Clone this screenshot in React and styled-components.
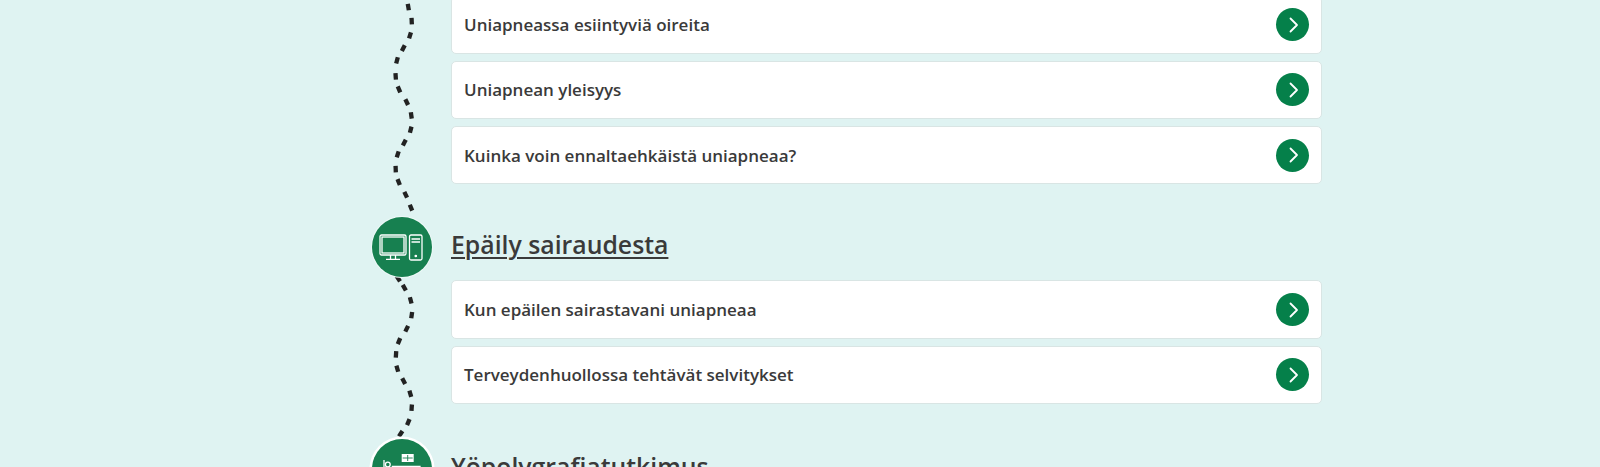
import React from 'react'
import styled, { createGlobalStyle } from 'styled-components'

const GlobalStyle = createGlobalStyle`
  html, body {
    margin: 0;
    padding: 0;
    background: #dff3f2;
    font-family: "Open Sans", "Liberation Sans", sans-serif;
    color: #3a3a3a;
  }
`

const steps = [
  {
    items: ['Uniapneassa esiintyviä oireita', 'Uniapnean yleisyys', 'Kuinka voin ennaltaehkäistä uniapneaa?'],
  },
  {
    title: 'Epäily sairaudesta',
    link: true,
    icon: 'computer',
    items: ['Kun epäilen sairastavani uniapneaa', 'Terveydenhuollossa tehtävät selvitykset'],
  },
  {
    title: 'Yöpolygrafiatutkimus',
    icon: 'bed',
    ring: true,
    items: [],
  },
]

// centre of each dash of the wavy line, in page pixels
const trailParts = [
  [[407, -7], [408.3, 6.7], [411.7, 20.7], [410, 35], [403.3, 47.7], [397, 60], [395.7, 76], [399, 89], [406.7, 101.7], [411.3, 115],
    [410.7, 129.3], [404.3, 142.3], [397.7, 154], [395.7, 168.7], [398.7, 181.7], [405.7, 194.3], [411, 207.3]],
  [[392, 268], [398.3, 278.3], [404.3, 287.3], [410.7, 300], [411.7, 314.7], [406.7, 328.3], [399, 340.7], [396, 354], [397.3, 368.3],
    [403.7, 380.7], [410.3, 393.3], [411.7, 407.3], [408.3, 421.7], [400.7, 433.3]],
]

const dashes = trailParts.flatMap(points =>
  points.slice(1).map((p, i) => {
    const prev = points[i]
    const next = points[i + 2] || p
    const dx = next[0] - prev[0]
    const dy = next[1] - prev[1]
    const len = Math.hypot(dx, dy)
    const half = 3.2
    return {
      x1: p[0] - (dx / len) * half,
      y1: p[1] - (dy / len) * half,
      x2: p[0] + (dx / len) * half,
      y2: p[1] + (dy / len) * half,
    }
  })
)

const ComputerIcon = () => (
  <svg width="46" height="30" viewBox="0 0 46 30" fill="none" stroke="#fff" strokeWidth="1.300">
    <rect x="1" y="3" width="26" height="20" rx="1.500" />
    <rect x="3" y="5" width="22" height="16" />
    <path d="M11.500 23v4.300M16.500 23v4.300M7 27.300h14" />
    <rect x="30.500" y="3" width="12.500" height="25" rx="1.500" />
    <path d="M32.500 7h8.500M32.500 10h8.500" />
    <circle cx="36.800" cy="24" r="0.700" fill="#fff" />
  </svg>
)

const BedIcon = () => (
  <svg width="46" height="30" viewBox="0 0 46 30" fill="none" stroke="#fff" strokeWidth="1.300">
    <rect x="22.700" y="0" width="12" height="8" fill="#fff" stroke="none" />
    <path d="M23.700 4h10M28.700 1v6" stroke="#178050" strokeWidth="0.900" />
    <path d="M5 6v24" />
    <circle cx="8.800" cy="10.600" r="2.400" />
    <path d="M12.700 12.300H41v3.500H12.700" />
  </svg>
)

const icons = { computer: ComputerIcon, bed: BedIcon }

const ChevronIcon = () => (
  <svg width="14" height="18" viewBox="0 0 14 18" fill="none" stroke="#fff" strokeWidth="1.800" strokeLinecap="round" strokeLinejoin="round">
    <path d="M4.500 2.500 11 9l-6.500 6.500" />
  </svg>
)

const App = () => {
  return (
    <Viewport>
      <GlobalStyle />
      <Container>
        <Timeline>
          <Trail width="60" height="470" viewBox="372 -4.400 60 470">
            {dashes.map((d, i) => (
              <line key={i} {...d} stroke="#222" strokeWidth="4.300" />
            ))}
          </Trail>
          {steps.map((step, index) => {
            const Icon = icons[step.icon]
            return (
              <Step key={index}>
                {step.title && (
                  <StepHead>
                    <IconCircle $ring={step.ring}>
                      <Icon />
                    </IconCircle>
                    <StepTitle $link={step.link}>{step.title}</StepTitle>
                  </StepHead>
                )}
                {step.items.length > 0 && (
                  <CardList>
                    {step.items.map(item => (
                      <Card key={item}>
                        <CardText>{item}</CardText>
                        <ArrowButton>
                          <ChevronIcon />
                        </ArrowButton>
                      </Card>
                    ))}
                  </CardList>
                )}
              </Step>
            )
          })}
        </Timeline>
      </Container>
    </Viewport>
  )
}

export default App

const Viewport = styled.div`
  height: 467px;
  overflow: hidden;
`

const Container = styled.div`
  width: 950px;
  margin: -4.4px 0 0 372px;
`

const Timeline = styled.div`
  position: relative;
  display: flex;
  flex-direction: column;
`

const Trail = styled.svg`
  position: absolute;
  left: 0;
  top: 0;
  overflow: visible;
`

const Step = styled.section`
  position: relative;
  display: flex;
  flex-direction: column;
  padding-bottom: 32.9px;
  &:last-child {
    padding-top: 2px;
  }
`

const StepHead = styled.div`
  display: flex;
  align-items: center;
  gap: 19px;
  height: 60px;
  margin-bottom: 3.2px;
`

const IconCircle = styled.div`
  flex: none;
  display: flex;
  align-items: center;
  justify-content: center;
  box-sizing: border-box;
  width: 60px;
  height: 60px;
  border-radius: 50%;
  background: #178050;
  box-shadow: 0 0 0 ${p => (p.$ring ? '2.5px #fff' : '1px #eef9f8')};
`

const StepTitle = styled.h2`
  margin: 0 0 5px;
  font-size: 24.8px;
  font-weight: 600;
  line-height: 1.2;
  color: #3a3a3a;
  text-decoration: ${p => (p.$link ? 'underline' : 'none')};
  text-decoration-thickness: 2px;
  text-underline-offset: 3px;
`

const CardList = styled.div`
  display: flex;
  flex-direction: column;
  gap: 6.8px;
  margin-left: 79px;
`

const Card = styled.a`
  display: flex;
  align-items: center;
  justify-content: space-between;
  box-sizing: border-box;
  height: 58.4px;
  padding: 0 12px;
  background: #fff;
  border: 1px solid #d9e5e4;
  border-radius: 5px;
`

const CardText = styled.span`
  font-size: 17px;
  font-weight: 600;
  color: #3a3a3a;
`

const ArrowButton = styled.span`
  display: flex;
  align-items: center;
  justify-content: center;
  width: 33px;
  height: 33px;
  border-radius: 50%;
  background: #05804a;
`
